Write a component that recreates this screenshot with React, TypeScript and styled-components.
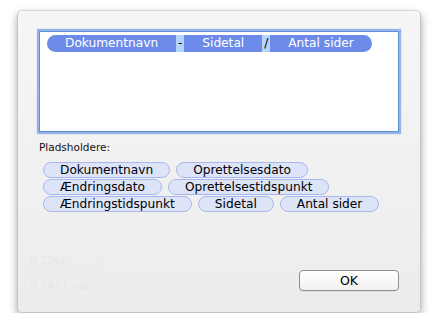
import * as React from "react";
import styled, { createGlobalStyle } from "styled-components";

const GlobalStyle = createGlobalStyle`
  html, body {
    margin: 0;
    padding: 0;
    background: #ffffff;
  }

  body {
    font-family: "DejaVu Sans", "Liberation Sans", sans-serif;
  }
`;

const tokens = ["Dokumentnavn", "Sidetal", "Antal sider"];
const separators = ["-", "/"];

const placeholders = [
  "Dokumentnavn",
  "Oprettelsesdato",
  "Ændringsdato",
  "Oprettelsestidspunkt",
  "Ændringstidspunkt",
  "Sidetal",
  "Antal sider",
];

const ghosts = ["0,25pt", "0,1411 cm"];

export default function App() {
  return (
    <>
      <GlobalStyle />

      <Sheet>
        <Content>
          <TokenField>
            <TokenLine>
              {tokens.map((t, i) => (
                <React.Fragment key={t}>
                  <Token
                    $first={i === 0}
                    $last={i === tokens.length - 1}
                  >
                    {t}
                  </Token>
                  {i < separators.length && <Sep>{separators[i]}</Sep>}
                </React.Fragment>
              ))}
            </TokenLine>
          </TokenField>

          <Label>Pladsholdere:</Label>

          <Chips>
            {placeholders.map((p) => (
              <Chip key={p}>{p}</Chip>
            ))}
          </Chips>
        </Content>

        <Footer>
          <Ghosts>
            {ghosts.map((g, i) => (
              <GhostBox key={i}>{g}</GhostBox>
            ))}
          </Ghosts>

          <OkButton>OK</OkButton>
        </Footer>
      </Sheet>
    </>
  );
}

const Sheet = styled.div`
  box-sizing: border-box;
  width: 404px;
  height: 303px;
  margin: 10px 0 0 17px;
  display: flex;
  flex-direction: column;
  border: 1px solid #c4c4c4;
  border-top-color: #d6d6d6;
  border-radius: 5px;
  background: linear-gradient(#f6f6f6, #ececec);
  box-shadow: 0 4px 9px rgba(0, 0, 0, 0.35);
  overflow: hidden;
`;

const Content = styled.div`
  padding: 20px 21px 0 21px;
  display: flex;
  flex-direction: column;
`;

const TokenField = styled.div`
  box-sizing: border-box;
  height: 101px;
  background: #ffffff;
  border: 1px solid #5f8fd6;
  box-shadow: 0 0 1px 2px rgba(118, 160, 228, 0.75);
  padding: 3px 7px;
`;

const TokenLine = styled.div`
  display: flex;
  align-items: center;
  height: 17px;
`;

const Token = styled.span<{ $first?: boolean; $last?: boolean }>`
  height: 17px;
  line-height: 17px;
  padding: 0 18px;
  background: #6c8be8;
  color: #ffffff;
  font-size: 12.2px;
  white-space: nowrap;
  border-radius: ${(p) =>
    p.$first ? "9px 0 0 9px" : p.$last ? "0 9px 9px 0" : "0"};
`;

const Sep = styled.span`
  width: 8px;
  height: 17px;
  line-height: 17px;
  text-align: center;
  background: #b5d3fb;
  color: #000000;
  font-size: 12.2px;
`;

const Label = styled.div`
  margin-top: 8px;
  font-size: 10.5px;
  line-height: 14px;
  color: #111111;
`;

const Chips = styled.div`
  margin-top: 8px;
  padding-left: 4px;
  width: 352px;
  display: flex;
  flex-wrap: wrap;
  column-gap: 6px;
  row-gap: 1px;
`;

const Chip = styled.span`
  box-sizing: border-box;
  height: 16px;
  line-height: 14px;
  padding: 0 16px;
  background: #dee4f8;
  border: 1px solid #a8b8ed;
  border-radius: 8px;
  color: #000000;
  font-size: 12.2px;
  white-space: nowrap;
`;

const Footer = styled.div`
  margin-top: auto;
  height: 60px;
  display: flex;
  justify-content: space-between;
  align-items: flex-start;
  padding: 0 21px 0 6px;
  overflow: hidden;
`;

const Ghosts = styled.div`
  display: flex;
  flex-direction: column;
  gap: 8px;
`;

const GhostBox = styled.div`
  box-sizing: border-box;
  width: 74px;
  height: 18px;
  padding-left: 5px;
  border: 1px solid #ebebeb;
  color: #e6e6e6;
  font-family: "DejaVu Serif", serif;
  font-size: 11px;
  line-height: 16px;
`;

const OkButton = styled.button`
  box-sizing: border-box;
  margin-top: 18px;
  width: 100px;
  height: 21px;
  padding: 0;
  border: 1px solid #8e8e8e;
  border-radius: 4px;
  background: linear-gradient(#ffffff, #f1f1f1);
  box-shadow: 0 1px 0 rgba(0, 0, 0, 0.05);
  color: #000000;
  font-family: "DejaVu Sans", "Liberation Sans", sans-serif;
  font-size: 12.5px;
  line-height: 19px;
`;
